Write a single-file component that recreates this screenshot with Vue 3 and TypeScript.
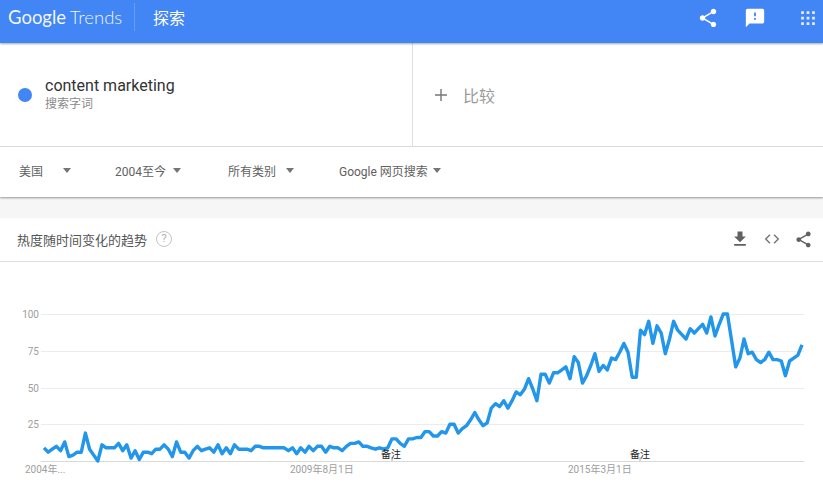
<script setup lang="ts">
import { computed } from 'vue';

// monthly interest values, read off the reference
const values: number[] = [
  9, 6, 8, 10, 7, 13, 3, 4, 6, 6, 19, 8, 4, 0, 11, 9, 9, 9, 12, 7, 11, 2, 7, 1, 6, 6, 5, 8, 8, 11,
  8, 3, 13, 6, 6, 2, 7, 10, 7, 8, 9, 6, 11, 5, 9, 5, 11, 8, 8, 8, 7, 10, 10, 9, 9, 9, 9,
  9, 9, 7, 9, 5, 9, 6, 10, 7, 10, 10, 6, 10, 9, 9, 7, 10, 12, 12, 13, 10, 10, 9, 8, 9, 8, 9, 15,
  15, 12, 10, 15, 15, 16, 16, 20, 20, 17, 17, 20, 19, 25, 25, 19, 22, 24, 28, 33, 28, 24, 26, 36,
  39, 37, 41, 36, 41, 47, 45, 49, 56, 49, 41,
  59, 59, 53, 60, 60, 62, 64, 56, 71, 67, 53, 58, 65, 73, 61, 65, 62, 70, 69, 74, 80, 74, 57, 57,
  89, 86, 95, 80, 92, 87, 73, 83, 95, 89, 86, 83, 90, 87, 90, 93, 87, 98, 85, 93, 100, 100, 82, 64,
  70, 83, 73, 74, 69, 67, 69, 74, 69, 69, 68, 58, 68, 70, 72, 79,
];

const chartTop = 262; // svg top in page coordinates
const yFor = (v: number) => 461 - chartTop - v * 1.47;

const points = computed(() => {
  const step = (802 - 44) / (values.length - 1);
  return values.map((v, i) => `${(44 + i * step).toFixed(1)},${yFor(v).toFixed(1)}`).join(' ');
});

const grid = [100, 75, 50, 25].map((v) => ({ v, y: Math.round(yFor(v)) + 0.5 }));
const filters = [
  { label: '美国', width: 96, gap: 20 },
  { label: '2004至今', width: 113, gap: 7 },
  { label: '所有类别', width: 111, gap: 10 },
  { label: 'Google 网页搜索', width: 120, gap: 5 },
];
</script>

<template>
  <div class="page">
    <header class="topbar">
      <div class="logo">Google <span class="logo-sub">Trends</span></div>
      <div class="sep"></div>
      <div class="explore">探索</div>
      <div class="top-icons">
        <svg class="ti" viewBox="0 0 24 24" width="22" height="22" style="margin-right: 25px"><path fill="#fff" d="M18 16.08c-.76 0-1.44.3-1.96.77L8.91 12.7c.05-.23.09-.46.09-.7s-.04-.47-.09-.7l7.05-4.11c.54.5 1.25.81 2.04.81 1.66 0 3-1.34 3-3s-1.34-3-3-3-3 1.34-3 3c0 .24.04.47.09.7L8.04 9.81C7.5 9.31 6.79 9 6 9c-1.66 0-3 1.34-3 3s1.34 3 3 3c.79 0 1.5-.31 2.04-.81l7.12 4.16c-.05.21-.08.43-.08.65 0 1.61 1.31 2.92 2.92 2.92s2.92-1.31 2.92-2.92-1.31-2.92-2.92-2.92z"/></svg>
        <svg class="ti" viewBox="0 0 24 24" width="22" height="22" style="margin-right: 31px"><path fill="#fff" d="M20 2H4c-1.1 0-2 .9-2 2v18l4-4h14c1.1 0 2-.9 2-2V4c0-1.1-.9-2-2-2zm-7 12h-2v-2h2v2zm0-4h-2V6h2v4z"/></svg>
        <svg class="ti" viewBox="0 0 24 24" width="22" height="22"><path fill="#fff" d="M4.5 7.5h3v-3h-3v3zm6 0h3v-3h-3v3zm6 0h3v-3h-3v3zM4.5 13.5h3v-3h-3v3zm6 0h3v-3h-3v3zm6 0h3v-3h-3v3zM4.5 19.5h3v-3h-3v3zm6 0h3v-3h-3v3zm6 0h3v-3h-3v3z" opacity=".85"/></svg>
      </div>
    </header>

    <section class="terms">
      <div class="term">
        <span class="dot"></span>
        <div class="term-text">
          <div class="term-name">content marketing</div>
          <div class="term-type">搜索字词</div>
        </div>
      </div>
      <div class="compare">
        <svg viewBox="0 0 12 12" width="12" height="12"><path d="M6 0v12M0 6h12" stroke="#777" stroke-width="1.4"/></svg>
        <span>比较</span>
      </div>
    </section>

    <section class="filters">
      <div v-for="f in filters" :key="f.label" class="filter" :style="{ width: f.width + 'px' }">
        <span>{{ f.label }}</span>
        <i class="caret" :style="{ marginLeft: f.gap + 'px' }"></i>
      </div>
    </section>

    <div class="spacer"></div>

    <section class="card">
      <div class="card-head">
        <span class="card-title">热度随时间变化的趋势</span>
        <span class="help">?</span>
        <div class="card-icons">
          <svg viewBox="0 0 24 24" width="20" height="20"><path fill="#616161" d="M19 9h-4V3H9v6H5l7 7 7-7zM5 18v2h14v-2H5z"/></svg>
          <svg viewBox="0 0 24 24" width="20" height="20"><path fill="none" stroke="#757575" stroke-width="1.7" d="M9.5 7 4.5 12l5 5M14.5 7l5 5-5 5"/></svg>
          <svg viewBox="0 0 24 24" width="19" height="19"><path fill="#616161" d="M18 16.08c-.76 0-1.44.3-1.96.77L8.91 12.7c.05-.23.09-.46.09-.7s-.04-.47-.09-.7l7.05-4.11c.54.5 1.25.81 2.04.81 1.66 0 3-1.34 3-3s-1.34-3-3-3-3 1.34-3 3c0 .24.04.47.09.7L8.04 9.81C7.5 9.31 6.79 9 6 9c-1.66 0-3 1.34-3 3s1.34 3 3 3c.79 0 1.5-.31 2.04-.81l7.12 4.16c-.05.21-.08.43-.08.65 0 1.61 1.31 2.92 2.92 2.92s2.92-1.31 2.92-2.92-1.31-2.92-2.92-2.92z"/></svg>
        </div>
      </div>

      <svg class="chart" width="823" height="241" viewBox="0 0 823 241">
        <g v-for="g in grid" :key="g.v">
          <line x1="41" x2="804" :y1="g.y" :y2="g.y" stroke="#ececec" />
          <text x="39" :y="g.y + 3.5" text-anchor="end" class="axis">{{ g.v }}</text>
        </g>
        <line x1="41" x2="804" y1="199.5" y2="199.5" stroke="#d9d9d9" />
        <polyline :points="points" fill="none" stroke="#2196ea" stroke-width="3.4" stroke-linejoin="round" />
        <g class="note">
          <line x1="392" x2="392" y1="195" y2="199" stroke="#aaa" />
          <text x="391" y="196" text-anchor="middle">备注</text>
          <line x1="640" x2="640" y1="195" y2="199" stroke="#aaa" />
          <text x="640" y="196" text-anchor="middle">备注</text>
        </g>
        <text x="25" y="211" class="axis">2004年...</text>
        <text x="290" y="211" class="axis">2009年8月1日</text>
        <text x="568" y="211" class="axis">2015年3月1日</text>
      </svg>
    </section>
  </div>
</template>

<style scoped>
.page {
  width: 823px;
  height: 503px;
  overflow: hidden;
  background: #fff;
  font-family: Roboto, "Noto Sans CJK SC", sans-serif;
}

.topbar {
  height: 43px;
  background: #4285f4;
  box-shadow: 0 1px 2px rgba(0, 0, 0, 0.35);
  display: flex;
  align-items: center;
  padding-left: 8px;
  color: #fff;
  position: relative;
}

.logo {
  font-family: Lato, Roboto, sans-serif;
  font-size: 18.5px;
  width: 126px;
  margin-top: -9px;
  color: rgba(255, 255, 255, 0.95);
  white-space: nowrap;
}

.logo-sub {
  font-weight: 300;
  margin-left: -1px;
}

.sep {
  width: 1px;
  height: 28px;
  margin-top: -9px;
  background: rgba(255, 255, 255, 0.2);
}

.explore {
  margin-left: 18px;
  margin-top: -9px;
  font-size: 16px;
}

.top-icons {
  margin-left: auto;
  margin-top: -7px;
  margin-right: 4px;
  display: flex;
  align-items: center;
}

.terms {
  height: 103px;
  display: flex;
  border-bottom: 1px solid #e0e0e0;
}

.term {
  width: 413px;
  box-sizing: border-box;
  border-right: 1px solid #e0e0e0;
  display: flex;
  align-items: center;
  padding-left: 18px;
}

.dot {
  width: 14px;
  height: 14px;
  border-radius: 50%;
  background: #4285f4;
  margin-right: 13px;
}

.term-name {
  font-size: 16px;
  line-height: 18px;
  color: #333;
}

.term-type {
  font-size: 12px;
  line-height: 16px;
  margin-top: 1px;
  color: #8a8a8a;
}

.compare {
  display: flex;
  align-items: center;
  padding-left: 22px;
  font-size: 16px;
  color: #9a9a9a;
}

.compare span {
  margin-left: 16px;
}

.filters {
  height: 50px;
  display: flex;
  align-items: center;
  padding-left: 19px;
  padding-bottom: 3px;
  box-sizing: border-box;
  box-shadow: 0 1px 2px rgba(0, 0, 0, 0.4);
  position: relative;
  font-size: 12px;
  color: #616161;
}

.filter {
  display: flex;
  align-items: center;
  flex: none;
  white-space: nowrap;
}

.caret {
  width: 0;
  height: 0;
  border-left: 4.5px solid transparent;
  border-right: 4.5px solid transparent;
  border-top: 5px solid #757575;
}

.spacer {
  height: 21px;
  background: #f6f6f6;
}

.card {
  background: #fff;
}

.card-head {
  height: 44px;
  box-sizing: border-box;
  border-bottom: 1px solid #e0e0e0;
  display: flex;
  align-items: center;
  padding-left: 17px;
  padding-bottom: 1px;
}

.card-title {
  font-size: 13px;
  color: #555;
}

.help {
  width: 14px;
  height: 14px;
  margin-left: 9px;
  border: 1.5px solid #c4c4c4;
  border-radius: 50%;
  color: #b0b0b0;
  font-size: 11px;
  line-height: 14px;
  text-align: center;
}

.card-icons {
  margin-left: auto;
  margin-right: 10px;
  display: flex;
  align-items: center;
  gap: 12px;
}

.chart {
  display: block;
}

.axis {
  font-size: 10px;
  fill: #9e9e9e;
}

.note text {
  font-size: 10px;
  fill: #222;
}
</style>

<style>
html, body {
  margin: 0;
  background: #fff;
}
</style>
